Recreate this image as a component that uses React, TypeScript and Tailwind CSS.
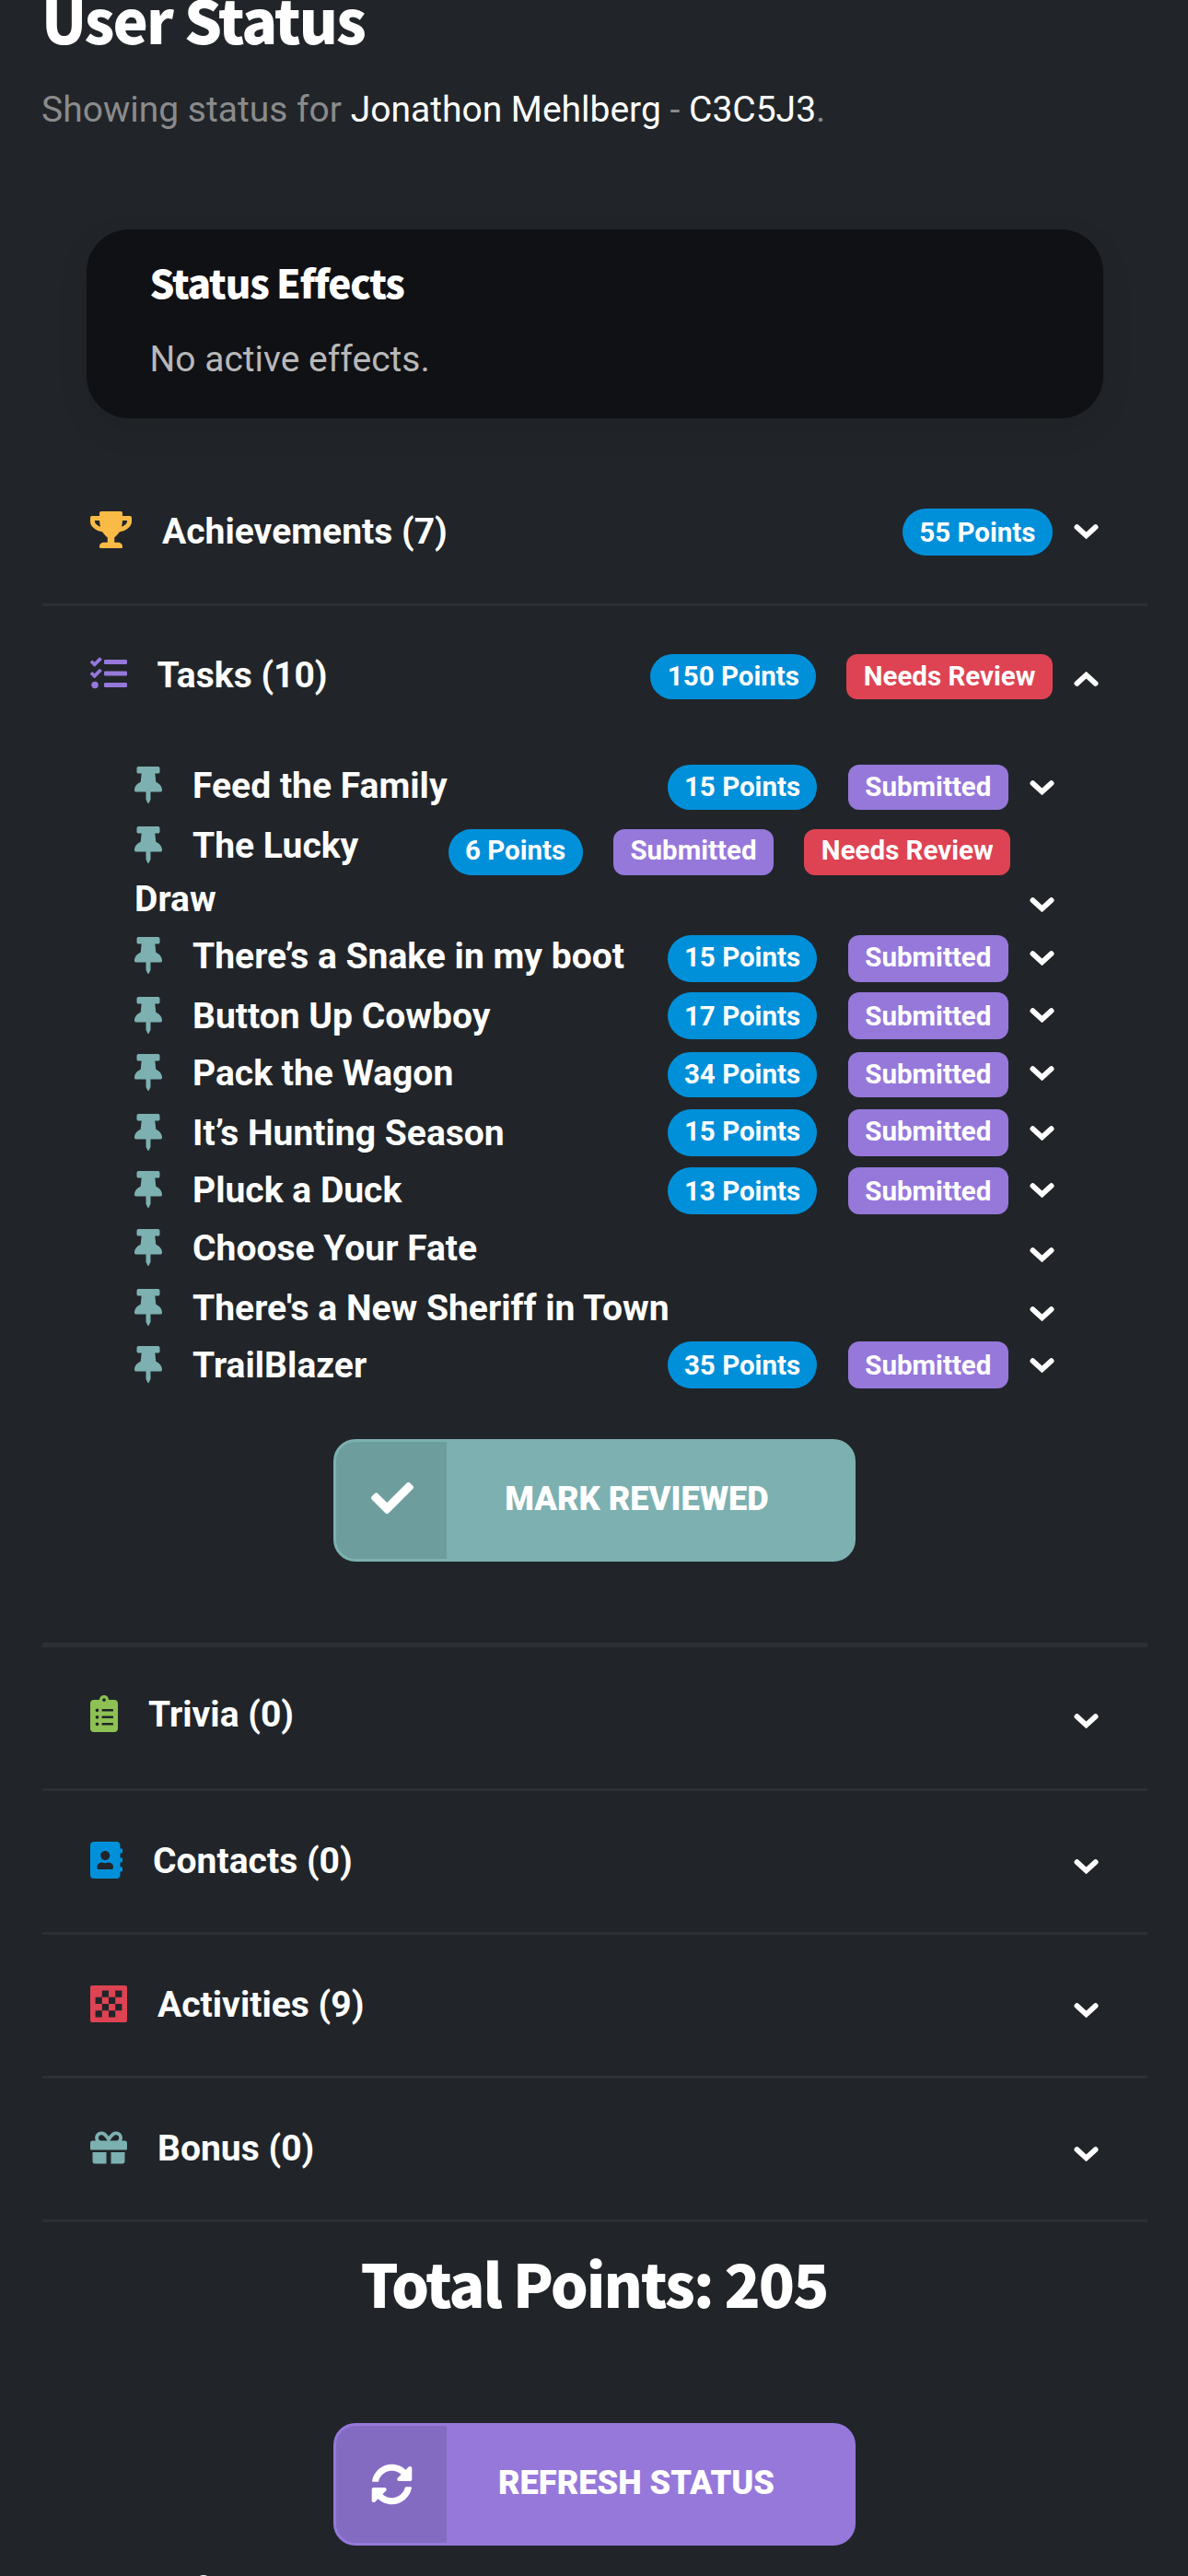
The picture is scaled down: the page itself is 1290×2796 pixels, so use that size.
import React from 'react';
import type { ReactNode } from 'react';
import {
  FaTrophy,
  FaTasks,
  FaThumbtack,
  FaClipboardList,
  FaAddressBook,
  FaGift,
  FaCheck,
  FaSyncAlt,
} from 'react-icons/fa';

function Chevron({ className = '' }: { className?: string }) {
  return (
    <svg viewBox="0 0 27 16" className={`h-4 w-[27px] shrink-0 ${className}`} fill="none" stroke="white" strokeWidth="5.8" strokeLinecap="round">
      <path d="M3.4 3.1 L13.5 12.3 L23.6 3.1" />
    </svg>
  );
}

function ChessBoardIcon({ className = '' }: { className?: string }) {
  return (
    <svg viewBox="0 0 40 40" className={className} fill="currentColor">
      <path
        fillRule="evenodd"
        d="M2 0H38Q40 0 40 2V38Q40 40 38 40H2Q0 40 0 38V2Q0 0 2 0Z
           M12.8 5.6h7.2v7.2h-7.2z M27.2 5.6h7.2v7.2h-7.2z
           M5.6 12.8h7.2v7.2h-7.2z M20 12.8h7.2v7.2h-7.2z
           M12.8 20h7.2v7.2h-7.2z M27.2 20h7.2v7.2h-7.2z
           M5.6 27.2h7.2v7.2h-7.2z M20 27.2h7.2v7.2h-7.2z"
      />
    </svg>
  );
}

type BadgeKind = 'points' | 'submitted' | 'review';

const badgeStyles: Record<BadgeKind, string> = {
  points: 'rounded-full bg-[#0090da]',
  submitted: 'rounded-xl bg-[#9678db]',
  review: 'rounded-xl bg-[#de4353]',
};

function Badge({ kind, className, children }: { kind: BadgeKind; className: string; children: ReactNode }) {
  return (
    <span className={`px-[18.4px] text-[29.5px] font-bold whitespace-nowrap ${badgeStyles[kind]} ${className}`}>
      {children}
    </span>
  );
}

function Section({
  icon,
  title,
  titleTop = 'mt-[47px]',
  height = 'h-[156px]',
  chevron = 'mt-[74px]',
  badges,
}: {
  icon: ReactNode;
  title: string;
  titleTop?: string;
  height?: string;
  chevron?: string;
  badges?: ReactNode;
}) {
  return (
    <div className={`flex items-start border-b-3 border-[#2c2f34] pr-[53px] pl-[52px] ${height}`}>
      {icon}
      <h4 className={`ml-[33px] text-[39.05px] leading-[58px] font-bold ${titleTop}`}>{title}</h4>
      <div className="ml-auto flex items-start gap-[33px]">{badges}</div>
      <Chevron className={`ml-[23.2px] ${chevron}`} />
    </div>
  );
}

type Task = {
  name: string;
  points?: number;
  height: string;
  badge?: string;
  chevron: string;
};

const firstTask: Task = { name: 'Feed the Family', points: 15, height: 'h-[65px]', badge: 'mt-1.5 h-[48.5px] leading-[48px]', chevron: 'mt-[23px]' };

const tasks: Task[] = [
  { name: 'There’s a Snake in my boot', points: 15, height: 'h-[65px]', badge: 'mt-1.5 h-[50.5px] leading-[48px]', chevron: 'mt-[23px]' },
  { name: 'Button Up Cowboy', points: 17, height: 'h-[62px]', badge: 'mt-[3px] h-[50.5px] leading-[52px]', chevron: 'mt-5' },
  { name: 'Pack the Wagon', points: 34, height: 'h-[65px]', badge: 'mt-1.5 h-[48.5px] leading-[48px]', chevron: 'mt-[21px]' },
  { name: 'It’s Hunting Season', points: 15, height: 'h-[62px]', badge: 'mt-[3px] h-[51px] leading-[48px]', chevron: 'mt-[21px]' },
  { name: 'Pluck a Duck', points: 13, height: 'h-[63px]', badge: 'mt-1 h-[50.5px] leading-[52px]', chevron: 'mt-[21px]' },
  { name: 'Choose Your Fate', height: 'h-[65px]', chevron: 'mt-7' },
  { name: "There's a New Sheriff in Town", height: 'h-[62px]', chevron: 'mt-[27px]' },
  { name: 'TrailBlazer', points: 35, height: 'h-[65px]', badge: 'mt-[3px] h-[51px] leading-[53px]', chevron: 'mt-[21px]' },
];

function Pin() {
  return <FaThumbtack className="mt-[7.7px] mr-[33px] h-10 w-[30px] shrink-0 text-[#7db0b1]" />;
}

function TaskRow({ task }: { task: Task }) {
  return (
    <div className={`flex items-start ${task.height}`}>
      <Pin />
      <span className="text-[39.05px] leading-[58px] font-bold whitespace-nowrap">{task.name}</span>
      {task.points !== undefined && task.badge && (
        <div className="ml-auto flex items-start gap-[33.4px]">
          <Badge kind="points" className={task.badge}>{task.points} Points</Badge>
          <Badge kind="submitted" className={task.badge}>Submitted</Badge>
        </div>
      )}
      <Chevron className={`${task.points === undefined ? 'ml-auto' : 'ml-[23.2px]'} ${task.chevron}`} />
    </div>
  );
}

function ActionButton({ icon, label, color, iconColor }: { icon: ReactNode; label: string; color: string; iconColor: string }) {
  return (
    <button className={`mx-auto flex h-[132.5px] w-[567px] overflow-hidden rounded-3xl border-3 ${color}`}>
      <span className={`flex h-full w-[120px] items-center justify-center pl-0.5 ${iconColor}`}>{icon}</span>
      <span className="flex-1 pr-[28px] text-center text-[36.2px] leading-[124px] font-black">{label}</span>
    </button>
  );
}

export default function App() {
  const mainBadge = 'mt-[52px] h-[48.5px] leading-[48px]';
  const luckyBadge = 'mt-[10.5px] h-[50.5px] leading-[47px]';
  return (
    <div className="h-[2796px] w-[1290px] overflow-hidden bg-[#212529] font-['Roboto',sans-serif] text-white">
      <div className="flow-root px-[45px]">
        <h1 className="-mt-3 font-['Noto_Sans_CJK_SC',sans-serif] text-[64.5px] leading-[64px] font-black tracking-[-1.93px]">
          User Status
        </h1>
        <p className="mt-[38px] text-[39px] leading-[58px] text-[#8b8b8c]">
          Showing status for <span className="text-white">Jonathon Mehlberg</span> - <span className="text-white">C3C5J3</span>.
        </p>

        <div className="mr-[47.5px] ml-[48.5px] mt-[101px] h-[204.5px] rounded-[46px] bg-[#101115] px-[69px] pt-8 shadow-[0_12px_36px_rgba(0,0,0,0.08)]">
          <h3 className="font-['Noto_Sans_CJK_SC',sans-serif] text-[42.3px] leading-[50px] font-black tracking-[-1.2px]">
            Status Effects
          </h3>
          <p className="mt-[30px] text-[39px] leading-[58px] text-[#b8b8b9]">No active effects.</p>
        </div>

        <div className="mt-[48.5px] mr-[-1px] ml-[1px] w-[1200px]">
          <Section
            icon={<FaTrophy className="mt-[53px] h-10 w-[45px] text-[#f9bb46]" />}
            title="Achievements (7)"
            titleTop="mt-[46px]"
            chevron="mt-[67px]"
            badges={<Badge kind="points" className="mt-[49.5px] h-[51px] leading-[52px]">55 Points</Badge>}
          />
          <div className="h-[1130px] border-b-[5px] border-[#2c2f34]">
            <div className="flex items-start pr-[53px] pl-[52px]">
              <FaTasks className="mt-[53px] h-10 w-10 text-[#9678db]" />
              <h4 className="mt-[46px] ml-[32.5px] text-[39.05px] leading-[58px] font-bold">Tasks (10)</h4>
              <div className="ml-auto flex items-start gap-[33px]">
                <Badge kind="points" className={mainBadge}>150 Points</Badge>
                <Badge kind="review" className={mainBadge}>Needs Review</Badge>
              </div>
              <Chevron className="mt-[71px] ml-[23.2px] rotate-180" />
            </div>

            <div className="mt-[62px] pr-[101px] pl-[100px]">
              <TaskRow task={firstTask} />
              <div className="flex h-[120px] items-start">
                <div className="w-[286px] text-[39.05px] leading-[58px] font-bold">
                  <div className="flex items-start">
                    <Pin />
                    The Lucky
                  </div>
                  Draw
                </div>
                <div className="-mr-[3px] ml-auto flex items-start gap-[33.5px]">
                  <Badge kind="points" className={luckyBadge}>6 Points</Badge>
                  <Badge kind="submitted" className={luckyBadge}>Submitted</Badge>
                  <Badge kind="review" className={luckyBadge}>Needs Review</Badge>
                </div>
                <Chevron className="mt-[85px] ml-6" />
              </div>
              {tasks.map((task) => (
                <TaskRow key={task.name} task={task} />
              ))}
            </div>

            <div className="mt-11 pr-px">
              <ActionButton
                icon={<FaCheck className="mb-1 size-[46px]" />}
                label="MARK REVIEWED"
                color="border-[#7db0b1] bg-[#7db0b1]"
                iconColor="bg-[#6d9d9d]"
              />
            </div>
          </div>
          <Section
            icon={<FaClipboardList className="mt-[52px] h-10 w-[30px] text-[#8dc153]" />}
            title="Trivia (0)"
            titleTop="mt-11"
            chevron="mt-[72px]"
          />
          <Section icon={<FaAddressBook className="mt-[55px] h-10 w-[35px] text-[#0090da]" />} title="Contacts (0)" />
          <Section icon={<ChessBoardIcon className="mt-[54.5px] size-10 text-[#de4353]" />} title="Activities (9)" />
          <Section icon={<FaGift className="mt-[54.5px] size-10 text-[#7db0b1]" />} title="Bonus (0)" />
        </div>

        <h2 className="mt-[25px] text-center font-['Noto_Sans_CJK_SC',sans-serif] text-[64.5px] leading-[80px] font-black tracking-[-1.95px]">
          Total Points: 205
        </h2>
        <div className="mt-[113px]">
          <ActionButton
            icon={<FaSyncAlt className="size-[45px]" />}
            label="REFRESH STATUS"
            color="border-[#9678db] bg-[#9678db]"
            iconColor="bg-[#846bc2]"
          />
        </div>
        <div className="mt-[32px] ml-[168px] h-3.5 w-4 rounded-[50%] bg-white" />
      </div>
    </div>
  );
}
